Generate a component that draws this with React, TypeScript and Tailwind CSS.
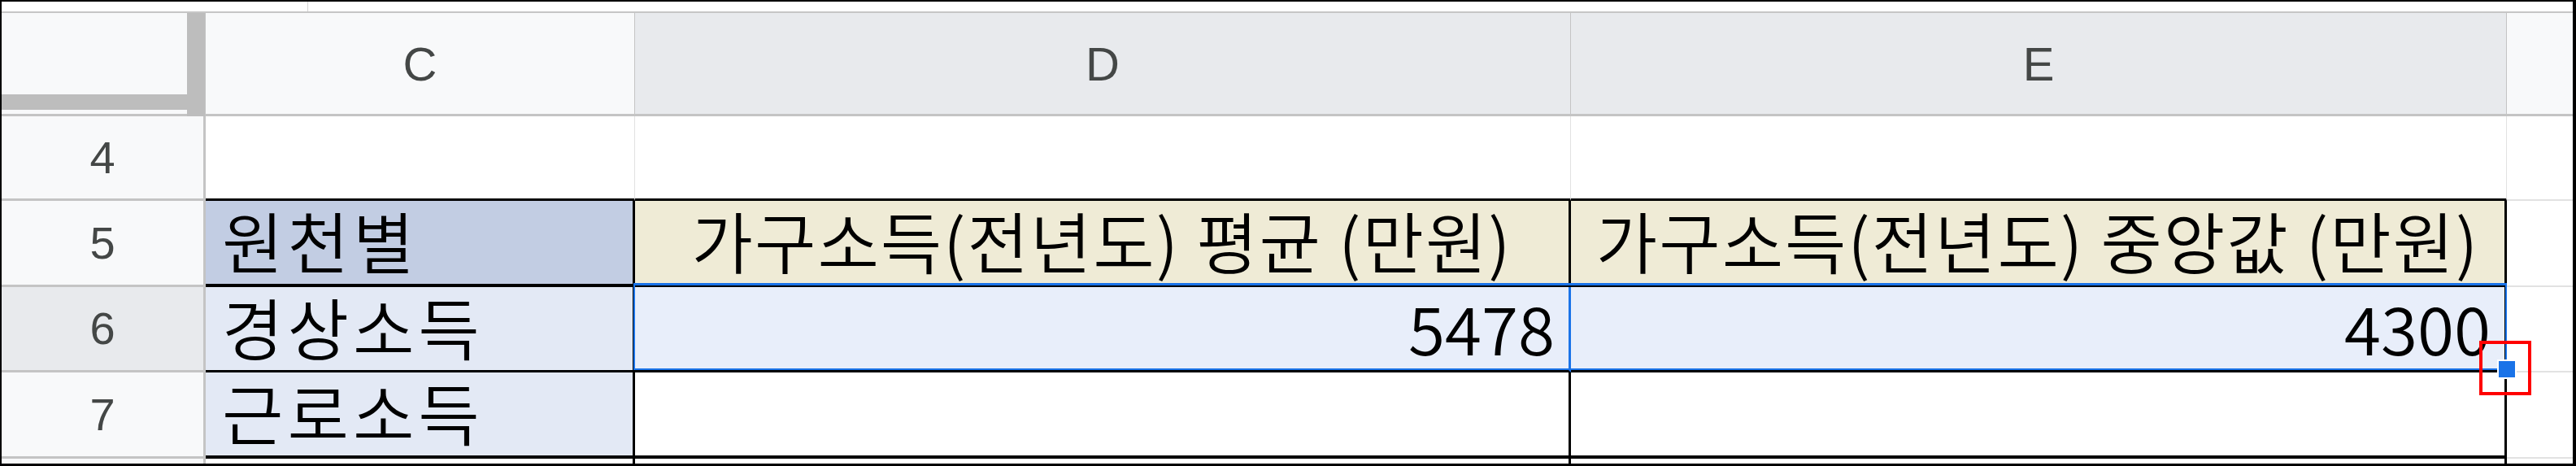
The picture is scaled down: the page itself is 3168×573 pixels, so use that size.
import { ReactElement, ReactNode } from "react";

const HEAD_FONT = "font-['Liberation_Sans',Arial,sans-serif]";
const CELL_FONT = "font-['Noto_Sans_CJK_KR','Noto_Sans',sans-serif]";

type RowProps = {
  n: number;
  height: string;
  selected?: boolean;
  children: ReactNode;
};

function Row({ n, height, selected, children }: RowProps): ReactElement {
  return (
    <div className={`flex ${height}`}>
      <div
        className={`w-[251px] shrink-0 flex items-center justify-center border-r-[3px] border-b-[3px] border-[#c4c4c4] text-[56px] font-normal tracking-normal text-[#444746] ${HEAD_FONT} ${
          selected ? "bg-[#e8eaed]" : "bg-[#f8f9fa]"
        }`}
      >
        {n}
      </div>
      {children}
      <div className="flex-1 bg-white border-b-2 border-[#e2e2e2]" />
    </div>
  );
}

export default function App(): ReactElement {
  return (
    <div className="relative w-[3168px] h-[573px] overflow-hidden bg-white border-t-2 border-l-2 border-r-4 border-b-[3px] border-black">
      {/* strip above the column headers */}
      <div className="relative h-[12px] bg-white">
        <div className="absolute left-[376px] top-0 h-full w-px bg-[#d4d4d4]" />
      </div>
      <div className="h-[2px] bg-[#c6c6c6]" />

      {/* column headers */}
      <div className={`flex h-[127px] text-[58px] text-[#444746] ${HEAD_FONT}`}>
        <div className="w-[228px] shrink-0 flex flex-col border-b-[3px] border-[#c4c4c4]">
          <div className="h-[100px] bg-[#f8f9fa]" />
          <div className="h-[19px] bg-[#bdbdbd]" />
          <div className="flex-1 bg-[#f8f9fa]" />
        </div>
        <div className="w-[23px] shrink-0 bg-[#bdbdbd] border-r border-[#c4c4c4]" />
        <div className="w-[528px] shrink-0 flex items-center justify-center bg-[#f8f9fa] border-r border-b-[3px] border-[#c4c4c4]">
          C
        </div>
        <div className="w-[1151px] shrink-0 flex items-center justify-center bg-[#e8eaed] border-r border-b-[3px] border-[#c4c4c4]">
          D
        </div>
        <div className="w-[1151px] shrink-0 flex items-center justify-center bg-[#e8eaed] border-r border-b-[3px] border-[#c4c4c4]">
          E
        </div>
        <div className="flex-1 bg-[#f8f9fa] border-b-[3px] border-[#c4c4c4]" />
      </div>

      <div className={`text-[82px] font-[350] leading-none text-black ${CELL_FONT}`}>
        <Row n={4} height="h-[104px]">
          <div className="w-[528px] shrink-0 bg-white border-r border-r-[#e2e2e2] border-b-[3px] border-b-black" />
          <div className="w-[1151px] shrink-0 bg-white border-r border-r-[#e2e2e2] border-b-[3px] border-b-black" />
          <div className="w-[1151px] shrink-0 bg-white border-r border-r-[#e2e2e2] border-b-[3px] border-b-black" />
        </Row>

        <Row n={5} height="h-[106px]">
          <div className="w-[528px] shrink-0 flex items-center pl-[20px] pb-[6px] tracking-[5px] bg-[#c2cde3] border-r-[3px] border-b-4 border-black">
            원천별
          </div>
          <div className="w-[1151px] shrink-0 flex items-center justify-center pb-[6px] tracking-[2px] whitespace-nowrap bg-[#efebd6] border-r-[3px] border-b-4 border-black">
            가구소득(전년도) 평균 (만원)
          </div>
          <div className="w-[1151px] shrink-0 flex items-center justify-center pb-[6px] tracking-[2px] whitespace-nowrap bg-[#efebd6] border-r-[3px] border-b-4 border-black">
            가구소득(전년도) 중앙값 (만원)
          </div>
        </Row>

        <Row n={6} height="h-[105px]" selected>
          <div className="w-[528px] shrink-0 flex items-center pl-[20px] pb-[6px] tracking-[5px] bg-[#e3e9f5] border-r-[3px] border-b-[3px] border-black">
            경상소득
          </div>
          <div className="w-[1151px] shrink-0 flex items-center justify-end pr-[17px] pb-[4px] bg-[#e8eefa] border-r-[3px] border-r-[#1a73e8] border-b-[3px] border-b-black">
            5478
          </div>
          <div className="w-[1151px] shrink-0 flex items-center justify-end pr-[17px] pb-[4px] bg-[#e8eefa] border-r-[3px] border-b-[3px] border-black">
            4300
          </div>
        </Row>

        <Row n={7} height="h-[106px]">
          <div className="w-[528px] shrink-0 flex items-center pl-[20px] pb-[6px] tracking-[5px] bg-[#e3e9f5] border-r-[3px] border-b-4 border-black">
            근로소득
          </div>
          <div className="w-[1151px] shrink-0 bg-white border-r-[3px] border-b-4 border-black" />
          <div className="w-[1151px] shrink-0 bg-white border-r-[3px] border-b-4 border-black" />
        </Row>

        {/* sliver of row 8 */}
        <div className="flex h-[6px]">
          <div className="w-[251px] shrink-0 bg-[#f8f9fa] border-r-[3px] border-[#c4c4c4]" />
          <div className="w-[528px] shrink-0 bg-white border-r-[3px] border-black" />
          <div className="w-[1151px] shrink-0 bg-white border-r-[3px] border-black" />
          <div className="w-[1151px] shrink-0 bg-white border-r-[3px] border-black" />
          <div className="flex-1 bg-white" />
        </div>
      </div>

      {/* selection outline D6:E6 */}
      <div className="absolute left-[777px] top-[346px] w-[2304px] h-[107px] border-2 border-t-[3px] border-[#1a73e8] pointer-events-none" />

      {/* fill handle */}
      <div className="absolute left-[3069px] top-[440px] w-[24px] h-[24px] bg-white p-[2px]">
        <div className="w-full h-full bg-[#1a73e8]" />
      </div>

      {/* red annotation box */}
      <div className="absolute left-[3047px] top-[417px] w-[64px] h-[67px] border-4 border-[#ff0000]" />
    </div>
  );
}
